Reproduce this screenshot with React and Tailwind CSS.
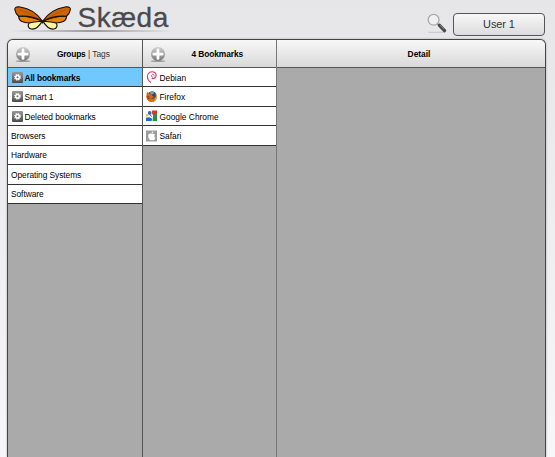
import React from "react";

function Gear() {
  return (
    <svg className="size-[11px] shrink-0" viewBox="0 0 11 11">
      <defs>
        <linearGradient id="gearBox" x1="0" y1="0" x2="0" y2="1">
          <stop offset="0" stopColor="#999" />
          <stop offset="1" stopColor="#4b4b4b" />
        </linearGradient>
      </defs>
      <rect width="11" height="11" rx="1" fill="url(#gearBox)" />
      <circle cx="5.5" cy="5.3" r="2.8" fill="none" stroke="#fff" strokeWidth="1.2" strokeDasharray="1.2 1" />
      <circle cx="5.5" cy="5.3" r="1.8" fill="none" stroke="#fff" strokeWidth="1.5" />
    </svg>
  );
}

function AddIcon() {
  return (
    <svg className="mt-[4px] h-[17px] w-[16px] shrink-0" viewBox="0 0 16 17">
      <defs>
        <linearGradient id="addBall" x1="0" y1="0" x2="0" y2="1">
          <stop offset="0" stopColor="#d0d0d0" />
          <stop offset="1" stopColor="#777" />
        </linearGradient>
      </defs>
      <ellipse cx="8" cy="14.2" rx="7.5" ry="0.9" fill="#999" />
      <circle cx="8" cy="7" r="7" fill="url(#addBall)" />
      <path d="M8 3v8.4M3.8 7.2h8.4" stroke="#fff" strokeWidth="2.8" strokeLinecap="round" />
    </svg>
  );
}

function Debian() {
  return (
    <svg className="size-[12px] shrink-0" viewBox="0 0 12 12" fill="none" stroke="#d23c67" strokeLinecap="round">
      <path d="M6.6 6.4C5.2 6.2 5 4.1 6.4 3.5 7.6 3.1 8.4 4 8.2 5.1" strokeWidth="0.8" />
      <path d="M6 7.5C8.5 8 10.2 6.2 10.1 4.2 10 2.2 8.5 1 6.8.8 4 .5 1.5 2.4 1.4 5.2 1.3 7.8 2.6 10 4.6 11.3" strokeWidth="1.1" />
    </svg>
  );
}

function Firefox() {
  return (
    <svg className="size-[12px] shrink-0" viewBox="0 0 12 12">
      <circle cx="5.7" cy="5.8" r="5.3" fill="#d76b18" />
      <path d="M3 1.5C5-.2 8.3.2 9.8 2.2 10.8 4.5 9.8 7 8 7.8 5.8 8.3 4.7 7.6 4.3 6.7L3 4.5Z" fill="#344c70" />
      <path d="M3.5 1.6 6 .6 8.3 1.5 7 3.3 5 3.4Z" fill="#739db5" />
      <path d="M.8 2 1.4.9 3.3 3 5.5 3.5 6.2 5 7.8 5.5 7 6.8 4.7 7.1C6 8.2 8 7.7 9.2 6.4L10 9 6.5 11.1 2.2 9.8.5 6Z" fill="#d76b18" />
      <path d="M9.6 1.9C12 5 11 10 6.8 11c2.5-1.8 3.6-4 2.8-9.1Z" fill="#f2b54a" />
      <path d="M1 4.4 3 5.2 3.6 8 1.8 8.3Z" fill="#984722" />
    </svg>
  );
}

function GoogleMark() {
  return (
    <svg className="size-[12px] shrink-0" viewBox="0 0 12 12">
      <rect y="0.5" width="11" height="10.5" fill="#f8fafc" />
      <path d="M5.8 .5H11v4L7.3 5.4 6.2 4Z" fill="#df352b" />
      <path d="M7.3 4.5 11 3.9V11H6.5L7 7Z" fill="#209345" />
      <path d="M0 7.8 3.2 7.3 6.2 8.8 5.6 11H0Z" fill="#2864c5" />
      <path d="M0 4.2 1.8 3.7 2.3 6 0 6.8Z" fill="#f3c02d" />
      <ellipse cx="3.7" cy="3" rx="1.8" ry="2.1" fill="#2e67bd" />
      <path d="m4.3 5 1.3 1.6" fill="none" stroke="#2e67bd" strokeWidth="1" />
    </svg>
  );
}

function Apple() {
  return (
    <svg className="size-[12px] shrink-0" viewBox="0 0 12 12">
      <rect x="0" y="0.5" width="11" height="11" fill="#9c9c9c" />
      <path d="M5.7 3.9C3.7 2.8 2 4 2.1 6c.1 2.2 1.5 4.2 2.6 4.2.6 0 .8-.3 1.3-.3.6 0 .8.3 1.4.3.9 0 1.6-1.2 2-2.3C8 7.2 8 5.3 9.1 4.6c-1-1.2-2.2-1-3.4-.7ZM5.6 3.4C5.5 2.3 6.2 1.4 7.3 1.2 7.4 2.4 6.7 3.2 5.6 3.4Z" fill="#fff" />
    </svg>
  );
}

function Butterfly() {
  return (
    <svg className="mt-[1px] h-[24px] w-[58px] shrink-0" viewBox="0 0 58 24" stroke="#15110b" strokeWidth="1.1" strokeLinejoin="round">
      <defs>
        <g id="wing">
          <path d="M28.3 15.2C20 11.5 13 10 4.6 10.3c.2 2.5.7 4 2.7 5 4 2 13 1.8 20.9-.1Z" fill="#e8820b" />
          <path d="M28.3 15C24 8.5 16 2.5 6.2 1 2 .4.4 1.6.9 4c.6 3.2 2.2 5 3.8 6.3C13 9.6 21 11.2 28.3 15Z" fill="#cf6405" />
          <path d="M28 15.6c-4.7-.2-9.4.3-12.9 1.5-1.8 2.5-.7 5.4 2.1 5.9 4.6 1 8.2-3.2 10.8-7.4Z" fill="#fff49f" />
          <path d="M28 15C20 10 13 6 5 3.8" fill="none" stroke="#8b4308" strokeWidth=".4" />
        </g>
      </defs>
      <use href="#wing" />
      <use href="#wing" transform="translate(57.2 0) scale(-1 1)" />
      <path d="m27.2 14 1.4 2 1.4-2M28.6 14.5v3" fill="none" strokeWidth="1.1" />
    </svg>
  );
}

function Magnifier() {
  return (
    <svg className="h-[22px] w-[20px]" viewBox="0 0 20 22">
      <path d="M1.5 19.3H18" stroke="#c4c4c4" strokeWidth="1" />
      <circle cx="6.6" cy="6.8" r="5.4" fill="#f0f0f2" stroke="#a9a9a9" strokeWidth="1.3" />
      <path d="m10.2 10.6 2 2" stroke="#999" strokeWidth="1.7" />
      <path d="m12.5 12.3 5 5.3" stroke="#494949" strokeWidth="3.4" strokeLinecap="round" />
      <path d="m13.2 12.2 3.8 3.9" stroke="#929292" strokeWidth=".8" />
    </svg>
  );
}

const groups = [
  { name: "All bookmarks", smart: true, active: true },
  { name: "Smart 1", smart: true },
  { name: "Deleted bookmarks", smart: true },
  { name: "Browsers" },
  { name: "Hardware" },
  { name: "Operating Systems" },
  { name: "Software" },
];

const bookmarks = [
  { name: "Debian", Icon: Debian },
  { name: "Firefox", Icon: Firefox },
  { name: "Google Chrome", Icon: GoogleMark },
  { name: "Safari", Icon: Apple },
];

const headerStyle = "flex h-[28px] shrink-0 items-center border-b border-[#555] bg-linear-to-b from-[#f8f8f8] to-[#d9d9d9]";
const rowStyle = "flex h-[19.45px] items-center border-b border-[#333] pl-[3px]";

export default function App() {
  return (
    <div className="flex h-[457px] w-[555px] flex-col overflow-hidden bg-linear-to-b from-[#e6e6e8] to-[#f7f7fa] font-['Liberation_Sans',Arial,sans-serif] text-[8.4px] leading-[12px] text-black">
      <header className="flex h-[39px] shrink-0 justify-between pl-[12px] pr-[10px]">
        <div className="flex h-[32px] w-[160px] flex-col pt-[5px]">
          <div className="flex h-[24px] items-start pl-[2px]">
            <Butterfly />
            <span className="ml-[5.5px] mt-[-1px] whitespace-nowrap text-[28px] leading-[27px] tracking-[0.5px] text-[#4a4a4d] [-webkit-text-stroke:0.3px_#4a4a4d]">Skæda</span>
          </div>
          <div className="mt-[1px] h-[2px] w-full shrink-0 bg-linear-to-r from-transparent via-[#999] to-transparent" />
        </div>
        <div className="flex items-start pt-[13px]">
          <Magnifier />
          <button className="ml-[6px] h-[23px] w-[92px] rounded-[4px] border border-[#555] bg-linear-to-b from-[#f8f8f8] to-[#dcdcdc] text-[11px] leading-none tracking-[-0.1px] text-[#333]">User 1</button>
        </div>
      </header>

      <main className="ml-[7px] flex h-[418px] w-[539px] overflow-hidden rounded-t-[6px] border border-b-0 border-[#444] bg-[#aaa] shadow-[0_0_2px_#999]">
        <section className="flex w-[135px] shrink-0 flex-col border-r border-[#555]">
          <div className={headerStyle + " pl-[7px]"}>
            <AddIcon />
            <span className="ml-[26px] mt-[1px] whitespace-nowrap"><b className="tracking-[-0.2px]">Groups</b> <span className="text-[#333]">| Tags</span></span>
          </div>
          {groups.map(({ name, smart, active }) => (
            <div key={name} className={rowStyle + (active ? " bg-[#70c8ff] font-bold tracking-[-0.15px]" : " bg-white tracking-[-0.06px]")}>
              {smart && <span className="ml-[0.5px] mr-[2px]"><Gear /></span>}
              <span className="mt-[1px] whitespace-nowrap">{name}</span>
            </div>
          ))}
        </section>

        <section className="flex w-[134px] shrink-0 flex-col border-r border-[#777]">
          <div className={headerStyle + " pl-[7px]"}>
            <AddIcon />
            <b className="ml-[25.5px] mt-[1px] whitespace-nowrap tracking-[-0.1px]">4 Bookmarks</b>
          </div>
          {bookmarks.map(({ name, Icon }) => (
            <div key={name} className={rowStyle + " bg-white"}>
              <Icon />
              <span className="ml-[1.5px] mt-[1px] whitespace-nowrap">{name}</span>
            </div>
          ))}
        </section>

        <section className="flex flex-1 flex-col">
          <div className={headerStyle + " justify-center"}>
            <b className="mt-[1px] pl-[16px]">Detail</b>
          </div>
        </section>
      </main>
    </div>
  );
}
